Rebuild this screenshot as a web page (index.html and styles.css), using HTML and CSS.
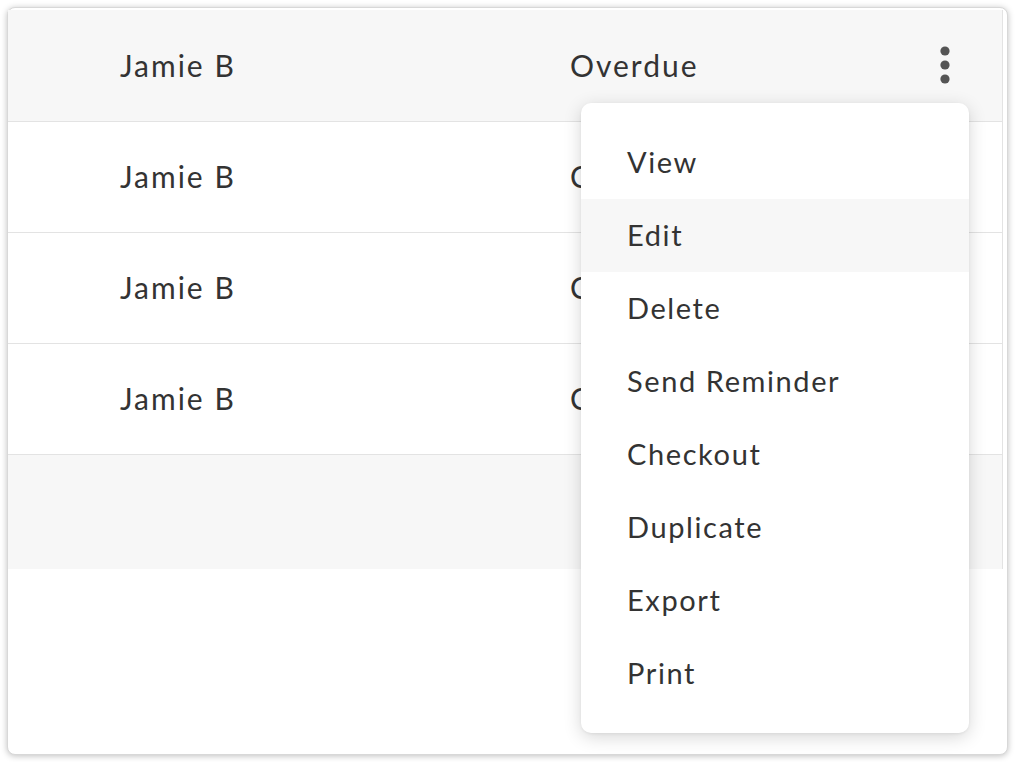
FILE: index.html
```html
<!DOCTYPE html>
<html>
<head>
<meta charset="utf-8">
<link rel="stylesheet" href="styles.css">
</head>
<body>
<div class="card">
  <div class="table">
    <div class="row head">
      <div class="name">Jamie B</div>
      <div class="status">Overdue</div>
      <div class="actions">
        <svg class="kebab" width="10" height="38" viewBox="0 0 10 38"><circle cx="5" cy="5" r="4.6" fill="#555"/><circle cx="5" cy="19" r="4.6" fill="#555"/><circle cx="5" cy="33" r="4.6" fill="#555"/></svg>
      </div>
    </div>
    <div class="row">
      <div class="name">Jamie B</div>
      <div class="status">Checked Out</div>
      <div class="actions"></div>
    </div>
    <div class="row">
      <div class="name">Jamie B</div>
      <div class="status">Checked Out</div>
      <div class="actions"></div>
    </div>
    <div class="row">
      <div class="name">Jamie B</div>
      <div class="status">Checked Out</div>
      <div class="actions"></div>
    </div>
    <div class="footer"></div>
  </div>
  <ul class="menu">
    <li>View</li>
    <li class="active">Edit</li>
    <li>Delete</li>
    <li>Send Reminder</li>
    <li>Checkout</li>
    <li>Duplicate</li>
    <li>Export</li>
    <li>Print</li>
  </ul>
</div>
</body>
</html>
```
FILE: styles.css
```css
html, body {
  margin: 0;
  padding: 0;
  background: #ffffff;
}
body {
  font-family: "Lato", "Open Sans", sans-serif;
  color: #333333;
}
.card {
  position: relative;
  box-sizing: border-box;
  margin: 7px;
  width: 1001px;
  height: 748px;
  border: 1px solid #d8d8d8;
  border-radius: 8px;
  box-shadow: 0 1px 6px rgba(0, 0, 0, 0.25);
  padding: 2px 4px 0 0;
  background: #fff;
}
.table {
  border-right: 1px solid #e3e3e3;
}
.row {
  display: grid;
  grid-template-columns: 562px 1fr 60px;
  align-items: center;
  height: 110px;
  border-bottom: 1px solid #e3e3e3;
  font-size: 30px;
  letter-spacing: 2px;
  background: #fff;
}
.row.head {
  height: 111px;
  background: #f7f7f7;
}
.name {
  padding-left: 112px;
  margin-top: -2px;
}
.status {
  white-space: nowrap;
  margin-top: -2px;
}
.actions {
  display: flex;
  justify-content: flex-start;
  align-items: center;
}
.kebab {
  display: block;
  margin-left: -2px;
  margin-top: -2px;
}
.footer {
  height: 114px;
  background: #f7f7f7;
}
.menu {
  position: absolute;
  left: 573px;
  top: 95px;
  width: 388px;
  margin: 0;
  padding: 23px 0 24px;
  list-style: none;
  background: #fff;
  border-radius: 10px;
  box-shadow: 0 4px 18px rgba(0, 0, 0, 0.16), 0 1px 3px rgba(0, 0, 0, 0.06);
  box-sizing: border-box;
  height: 630px;
}
.menu li {
  height: 73px;
  line-height: 71px;
  padding-left: 46px;
  font-size: 29px;
  letter-spacing: 1.6px;
  color: #333;
}
.menu li.active {
  background: #f7f7f7;
}
```
